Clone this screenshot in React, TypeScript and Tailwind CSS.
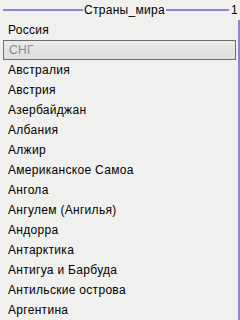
const countries = [
  "Австралия",
  "Австрия",
  "Азербайджан",
  "Албания",
  "Алжир",
  "Американское Самоа",
  "Ангола",
  "Ангулем (Ангилья)",
  "Андорра",
  "Антарктика",
  "Антигуа и Барбуда",
  "Антильские острова",
  "Аргентина",
]

export default function App() {
  return (
    <div className="w-[240px] h-[320px] overflow-hidden bg-[#f0f0ee] text-[12px] tracking-[0.3px] text-black font-['Liberation_Sans',Arial,sans-serif] flex">
      <div className="flex-1 flex flex-col">
        <div className="h-[20px] flex items-center pl-[3px]">
          <div className="flex-1 h-[2px] bg-[#8c86d2]" />
          <span className="px-[1px] leading-none">Страны_мира</span>
          <div className="w-[63px] h-[2px] bg-[#8c86d2]" />
          <span className="pl-[2px] leading-none">1</span>
        </div>
        <div className="h-[20px] flex items-center pl-[8px]">Россия</div>
        <div className="h-[20px] flex items-center ml-[3px] mr-[2px] pl-[5px] border border-[#6b6f78] bg-gradient-to-b from-[#eaeaea] to-[#dedede] text-[#8a8a8a]">
          СНГ
        </div>
        {countries.map((c) => (
          <div key={c} className="h-[20px] flex items-center pl-[8px]">
            {c}
          </div>
        ))}
      </div>
      <div className="w-[2px] mt-[20px] bg-[#8c86d2]" />
    </div>
  )
}
